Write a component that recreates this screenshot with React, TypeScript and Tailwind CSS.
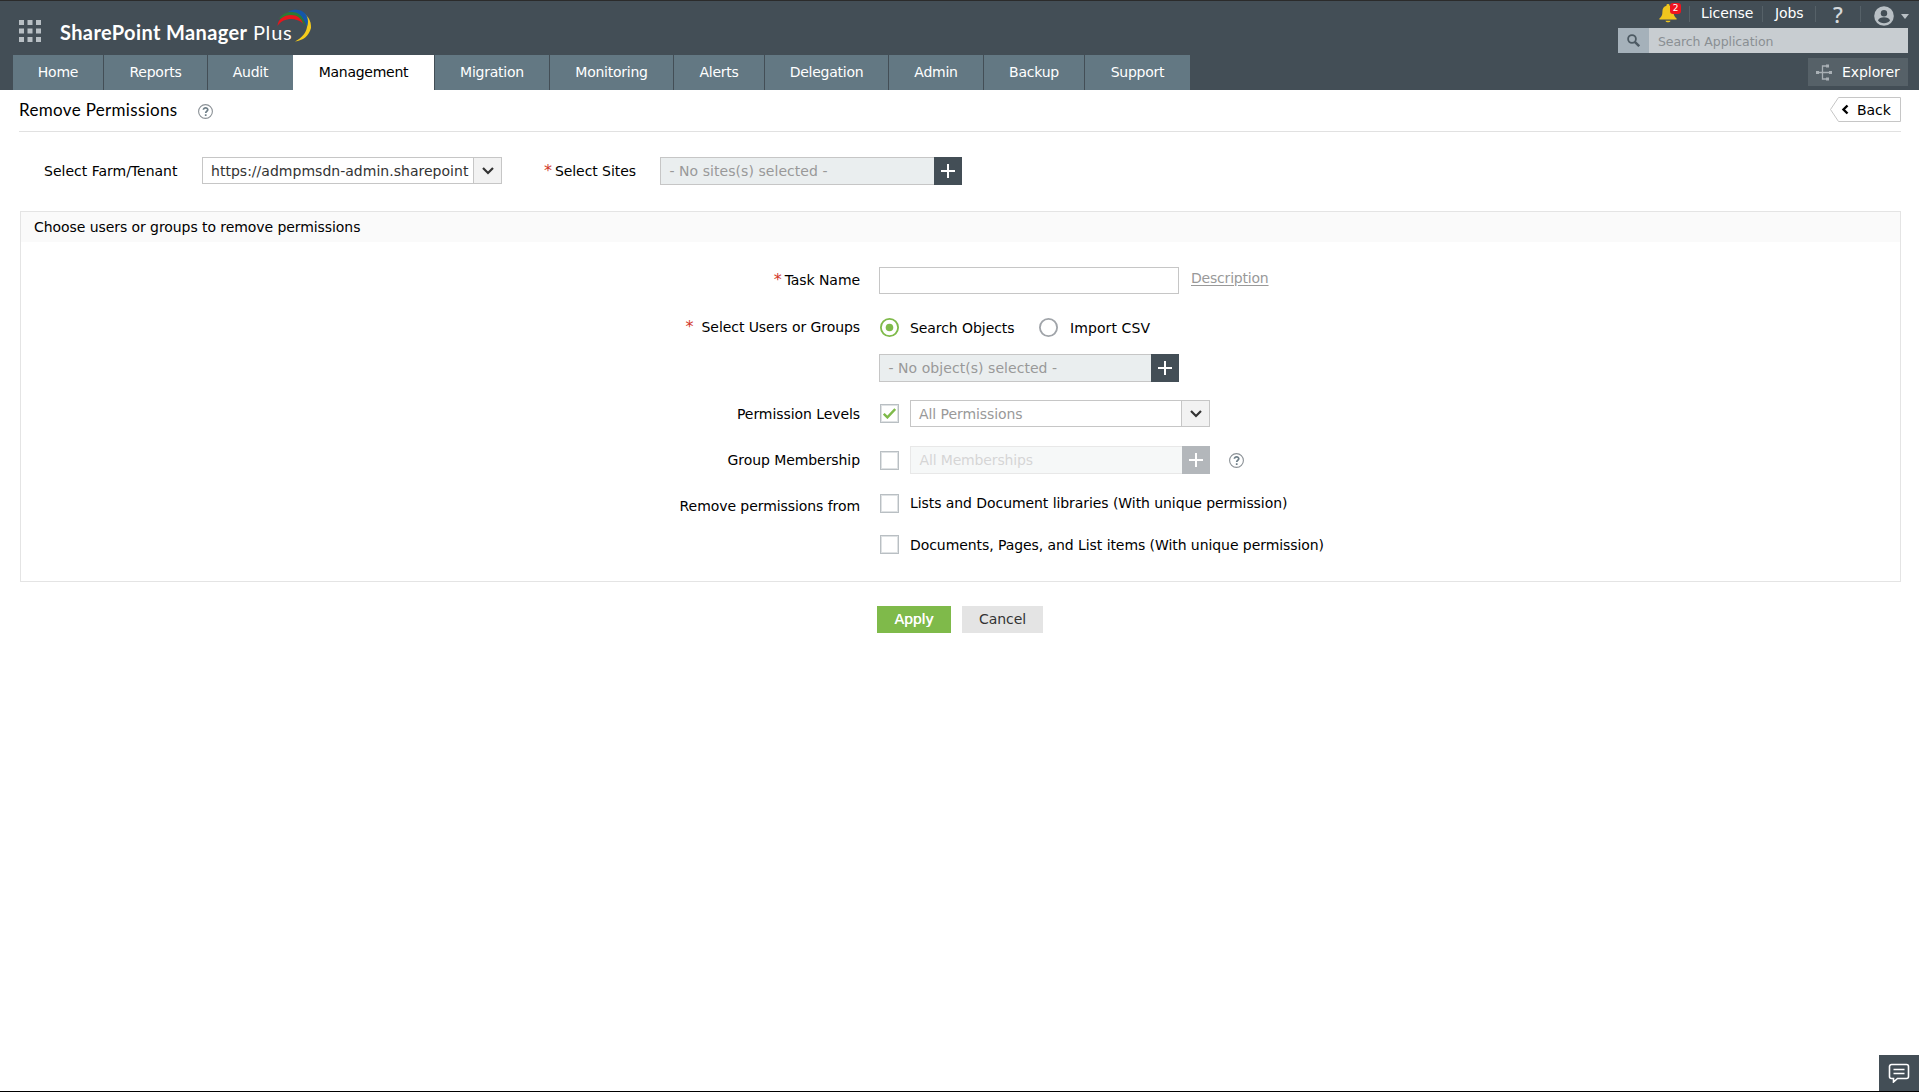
import clsx from "clsx";

const TABS = [
  { label: "Home", width: "w-[90px]" },
  { label: "Reports", width: "w-[103px]" },
  { label: "Audit", width: "w-[85px]" },
  { label: "Management", width: "w-[141px]", active: true },
  { label: "Migration", width: "w-[114px]" },
  { label: "Monitoring", width: "w-[123px]" },
  { label: "Alerts", width: "w-[90px]" },
  { label: "Delegation", width: "w-[123px]" },
  { label: "Admin", width: "w-[94px]" },
  { label: "Backup", width: "w-[100px]" },
  { label: "Support", width: "w-[105px]" },
];

export default function App(): React.ReactElement {
  return (
    <div className="h-[1092px] w-[1919px] overflow-hidden flex flex-col bg-white border-b border-black font-['Verdana','DejaVu_Sans',sans-serif] text-sm leading-5 tracking-[-0.07px] text-black">
      <Header />
      <main className="flex-1 px-[19px] pr-[18px]">
        <TitleBar />
        <FarmRow />
        <PermissionPanel />
        <div className="flex gap-[11px] pl-[858px] mt-6">
          <button className="w-[74px] h-[27px] pb-[2px] bg-[#7fba4a] text-white [text-shadow:0.3px_0_0_#fff]">
            Apply
          </button>
          <button className="w-[81px] h-[27px] pb-[2px] bg-[#e4e4e4] text-[#333]">
            Cancel
          </button>
        </div>
      </main>
      <button className="self-end w-10 h-9 bg-[#434e56] flex items-center justify-center">
        <ChatIcon />
      </button>
    </div>
  );
}

function Header(): React.ReactElement {
  return (
    <header className="h-[90px] shrink-0 bg-[#434e56] border-t border-[#2b2b2b] flex justify-between text-white">
      <div className="flex flex-col justify-between pl-[13px]">
        <div className="flex pl-1.5 pt-[19px]">
          <AppGridIcon />
          <div className="relative ml-[19px] whitespace-nowrap font-[Lato,sans-serif] text-[20px] leading-6 tracking-[0.38px]">
            <span className="font-bold">SharePoint Manager</span>{" "}
            <span className="font-normal tracking-[0.8px]">Plus</span>
            <LogoSwoosh />
          </div>
        </div>
        <nav className="flex gap-px tracking-[-0.25px]">
          {TABS.map((tab) => (
            <a
              key={tab.label}
              className={clsx(
                "h-[35px] pb-[2px] flex items-center justify-center",
                tab.width,
                tab.active ? "-ml-px bg-white text-black" : "bg-[#637883]",
              )}
            >
              {tab.label}
            </a>
          ))}
        </nav>
      </div>

      <div className="w-[301px] flex flex-col">
        <div className="h-[27px] flex items-start">
          <div className="relative ml-[41px] mt-[3px]">
            <BellIcon />
            <span className="absolute left-[11px] -top-px size-[11px] rounded-[3px] bg-[#f0141e] text-[9px] leading-[11px] text-center tracking-normal">
              2
            </span>
          </div>
          <Divider className="ml-[12px]" />
          <a className="ml-[11px] mt-[2px] w-[51px]">License</a>
          <Divider className="ml-[10px]" />
          <a className="ml-[12px] mt-[2px] w-[30px]">Jobs</a>
          <Divider className="ml-[10px]" />
          <span className="ml-[17px] mt-[3px] w-[12px] text-[22px] leading-5 font-['Noto_Sans',sans-serif] font-medium tracking-normal text-[#d5d9dc]">
            ?
          </span>
          <Divider className="ml-[15px]" />
          <AvatarIcon />
          <span className="ml-[7px] mt-[13px] border-x-[4.5px] border-t-[5px] border-x-transparent border-t-[#b9c0c5]" />
        </div>
        <div className="flex w-[290px] h-[25px] bg-[#c8cdd1]">
          <span className="w-[31px] bg-[#a5b1ba] flex items-center justify-center">
            <SearchIcon />
          </span>
          <span className="pl-[9px] text-[12.5px] leading-[27px] tracking-[-0.08px] text-[#8a8f93]">
            Search Application
          </span>
        </div>
        <a className="ml-[190px] mt-[5px] w-[100px] h-7 bg-[#566168] flex items-center pl-2">
          <ExplorerIcon />
          <span className="ml-[9px] pb-px">Explorer</span>
        </a>
      </div>
    </header>
  );
}

function Divider({ className }: { className?: string }): React.ReactElement {
  return (
    <span
      className={clsx("w-px h-4 mt-[5px] shrink-0 bg-[#566168]", className)}
    />
  );
}

function TitleBar(): React.ReactElement {
  return (
    <div className="h-[42px] border-b border-[#e1e1e1] flex justify-between">
      <div className="flex">
        <h1 className="mt-[9px] w-[158px] whitespace-nowrap font-[Lato,sans-serif] text-[17px] leading-[22px] tracking-[0.33px]">
          Remove Permissions
        </h1>
        <span className="ml-[21px] mt-[14px]">
          <HelpIcon />
        </span>
      </div>
      <a className="relative mt-[7px] h-[25px] w-[71px]">
        <svg className="block" width="71" height="25" fill="none">
          <path d="M8.5.5h62v24h-62l-8-12z" stroke="#c6c6c6" />
          <path d="M17.5 8.5l-4 4 4 4" stroke="#000" strokeWidth="2.4" />
        </svg>
        <span className="absolute left-[27px] top-[3px]">Back</span>
      </a>
    </div>
  );
}

function FarmRow(): React.ReactElement {
  return (
    <div className="flex pl-[25px] pt-[25px] h-[79px]">
      <span className="w-[158px] mt-[4px] tracking-normal">
        Select Farm/Tenant
      </span>
      <Dropdown
        text="https://admpmsdn-admin.sharepoint"
        className="text-[#333] tracking-[0.02px]"
      />
      <span className="w-[158px] mt-[4px] pl-[42px] flex">
        <Required />
        <span className="ml-[3px] whitespace-nowrap">Select Sites</span>
      </span>
      <Picker text="- No sites(s) selected -" className="w-[302px]" />
    </div>
  );
}

function PermissionPanel(): React.ReactElement {
  return (
    <section className="ml-px h-[371px] w-[1881px] border border-[#e4e4e4]">
      <h2 className="h-[30px] bg-[#fafafa] pl-[13px] pt-[5px]">
        Choose users or groups to remove permissions
      </h2>

      <FormRow label="Task Name" required raised className="mt-[25px] h-[27px]">
        <input className="w-[300px] h-[27px] border border-[#c6c6c6]" />
        <a className="ml-[12px] -mt-[6px] underline underline-offset-2 tracking-[-0.2px] text-[#999]">
          Description
        </a>
      </FormRow>
      <FormRow
        label="Select Users or Groups"
        required
        wide
        raised
        className="mt-6 h-[19px]"
      >
        <Radio checked />
        <span className="ml-[11px] mt-px w-[109px] whitespace-nowrap">
          Search Objects
        </span>
        <span className="ml-[19px] flex">
          <Radio />
        </span>
        <span className="ml-[12px] mt-px tracking-[0.1px]">Import CSV</span>
      </FormRow>
      <FormRow className="mt-[17px] h-7">
        <Picker text="- No object(s) selected -" className="w-[300px]" />
      </FormRow>
      <FormRow label="Permission Levels" className="mt-[18px] h-[27px]">
        <Checkbox checked />
        <Dropdown text="All Permissions" className="ml-[11px] text-[#999]" />
      </FormRow>
      <FormRow label="Group Membership" className="mt-[19px] h-7">
        <Checkbox />
        <Picker
          text="All Memberships"
          className="ml-[11px] w-[300px] tracking-[-0.15px]"
          disabled
        />
        <span className="ml-[19px]">
          <HelpIcon />
        </span>
      </FormRow>
      <FormRow label="Remove permissions from" low className="mt-[19px] h-5">
        <Checkbox />
        <span className="ml-[11px]">
          Lists and Document libraries (With unique permission)
        </span>
      </FormRow>
      <FormRow className="mt-[22px] h-[19px]">
        <Checkbox />
        <span className="ml-[11px]">
          Documents, Pages, and List items (With unique permission)
        </span>
      </FormRow>
    </section>
  );
}

function FormRow({
  label,
  required,
  wide,
  low,
  raised,
  className,
  children,
}: {
  label?: string;
  required?: boolean;
  wide?: boolean;
  low?: boolean;
  raised?: boolean;
  className: string;
  children: React.ReactNode;
}): React.ReactElement {
  return (
    <div className={clsx("flex items-center", className)}>
      <div
        className={clsx(
          "w-[839px] mr-[19px] shrink-0 flex justify-end",
          wide ? "gap-2" : "gap-[3px]",
          low && "pt-[5px]",
          raised && "pb-[2px]",
        )}
      >
        {required && <Required />}
        <span>{label}</span>
      </div>
      {children}
    </div>
  );
}

function Required(): React.ReactElement {
  return <span className="text-[#d2392b] text-[16px] leading-[19px]">*</span>;
}

function Dropdown({
  text,
  className,
}: {
  text: string;
  className?: string;
}): React.ReactElement {
  return (
    <div
      className={clsx(
        "w-[300px] h-[27px] border border-[#c6c6c6] flex bg-white",
        className,
      )}
    >
      <span className="flex-1 pl-2 leading-[26px] whitespace-nowrap overflow-hidden">
        {text}
      </span>
      <span className="w-7 shrink-0 border-l border-[#c6c6c6] bg-[#f2f2f2] flex items-center justify-center">
        <svg width="12" height="8" fill="none">
          <path d="M1 1l5 5 5-5" stroke="#333" strokeWidth="2.2" />
        </svg>
      </span>
    </div>
  );
}

function Picker({
  text,
  disabled,
  className,
}: {
  text: string;
  disabled?: boolean;
  className?: string;
}): React.ReactElement {
  return (
    <div
      className={clsx(
        "h-7 flex",
        disabled ? "opacity-40" : "tracking-[0.05px]",
        className,
      )}
    >
      <span className="flex-1 border border-r-0 border-[#c6c6c6] bg-[#eaeeef] pl-[8.5px] leading-[26px] text-[#999]">
        {text}
      </span>
      <span className="w-7 bg-[#434e56] flex items-center justify-center">
        <svg width="14" height="14" stroke="#fff" strokeWidth="2">
          <path d="M0 7h14M7 0v14" />
        </svg>
      </span>
    </div>
  );
}

function Checkbox({ checked }: { checked?: boolean }): React.ReactElement {
  return (
    <span className="ml-px size-[19px] shrink-0 border border-[#b9bfc3] shadow-[inset_0_0_0_1px_#dfe2e4] flex items-center justify-center">
      {checked && (
        <svg width="13" height="11" fill="none">
          <path d="M.8 5.8l3.6 3.6L12.2 1" stroke="#7fba4a" strokeWidth="2.4" />
        </svg>
      )}
    </span>
  );
}

function Radio({ checked }: { checked?: boolean }): React.ReactElement {
  return (
    <svg className="ml-px shrink-0" width="19" height="19" fill="none">
      <circle
        cx="9.5"
        cy="9.5"
        r="8.6"
        stroke={checked ? "#7fba4a" : "#a0a4a9"}
        strokeWidth="1.8"
      />
      {checked && <circle cx="9.5" cy="9.5" r="3.8" fill="#7fba4a" />}
    </svg>
  );
}

function HelpIcon(): React.ReactElement {
  return (
    <svg className="block" width="15" height="15" fill="none" stroke="#6f7f88">
      <circle cx="7.5" cy="7.5" r="6.9" stroke="#8b9196" strokeWidth="1.1" />
      <path
        d="M5.4 5.8c0-2.6 4.4-2.6 4.4 0 0 1.5-2.1 1.5-2.1 3.2M7.7 10.3v1.6"
        strokeWidth="1.7"
      />
    </svg>
  );
}

function AppGridIcon(): React.ReactElement {
  return (
    <svg width="22" height="22" fill="#b9c0c5">
      {[0, 8.5, 17].map((y) =>
        [0, 8.5, 17].map((x) => (
          <rect key={`${x}-${y}`} x={x} y={y} width="5" height="5" />
        )),
      )}
    </svg>
  );
}

// Four overlapping crescents, widest (yellow) on the right
function LogoSwoosh(): React.ReactElement {
  return (
    <svg
      className="absolute left-[217px] -top-[11px]"
      width="35"
      height="33"
      fill="none"
    >
      <path d="M22 2.2C31 5 34.500 12 34 19 32 27 26 31.500 18 32.500 25 28.500 29 24 30 18 30 11 27 6 22 2.200z" fill="#f5cb1c" />
      <path d="M11 2.500C18-.5 25 .5 28.500 5c3 4 3 9 1.500 13-2-8-8-14-19-15.500z" fill="#1557a8" />
      <path d="M2 10C6 3 16 1 22.500 5.500c3 2.500 5 6 5.800 11.500C24 9 14 5 2 10z" fill="#2c7a35" />
      <path d="M.5 17C1 10 7 6 14 6c6 0 10 3 12 8.500C20 9 7 7.500.5 17z" fill="#e5161c" />
    </svg>
  );
}

function BellIcon(): React.ReactElement {
  return (
    <svg width="18" height="19" fill="#f0c61e">
      <path d="M9 0a1.500 1.500 0 0 1 1.500 1.800c2.800.8 4.100 2.700 4.100 6.200 0 3.400.9 4.700 3 6.500v1H.400v-1c2.100-1.800 3-3.100 3-6.500 0-3.500 1.300-5.400 4.100-6.200A1.500 1.500 0 0 1 9 0zM6.500 16.700h5c-.4 2.200-4.600 2.200-5 0z" />
    </svg>
  );
}

function AvatarIcon(): React.ReactElement {
  return (
    <svg className="ml-[13px] mt-[5px] shrink-0" width="20" height="20">
      <circle cx="10" cy="10" r="9.8" fill="#b9c0c5" />
      <circle cx="10" cy="7.2" r="3.2" fill="#434e56" />
      <path d="M4 14.600c1.200-4.400 10.800-4.400 12 0-2.600 3.600-9.400 3.600-12 0z" fill="#434e56" />
    </svg>
  );
}

function SearchIcon(): React.ReactElement {
  return (
    <svg width="13" height="13" fill="none" stroke="#4d5a63">
      <circle cx="5" cy="5" r="3.9" strokeWidth="1.8" />
      <path d="M7.800 7.800l4.400 4.400" strokeWidth="2.4" />
    </svg>
  );
}

function ExplorerIcon(): React.ReactElement {
  return (
    <svg width="17" height="17" fill="none">
      <path d="M2 8.500h13M11 2H6.500v13H11" stroke="#a9b0b5" strokeWidth="1.3" />
      <path d="M0 7h3v3H0zM10 .500h3v3h-3zM13 7h3v3h-3zM10 13.500h3v3h-3z" fill="#a9b0b5" />
    </svg>
  );
}

function ChatIcon(): React.ReactElement {
  return (
    <svg width="22" height="20" fill="none" stroke="#fff">
      <path
        d="M3.500 1.500h15a2 2 0 0 1 2 2v10a2 2 0 0 1-2 2H9.500L5.500 19v-3.500h-2a2 2 0 0 1-2-2v-10a2 2 0 0 1 2-2z"
        strokeWidth="1.6"
      />
      <path d="M5.500 6.500h11M5.500 10.500h11" strokeWidth="1.5" />
    </svg>
  );
}
